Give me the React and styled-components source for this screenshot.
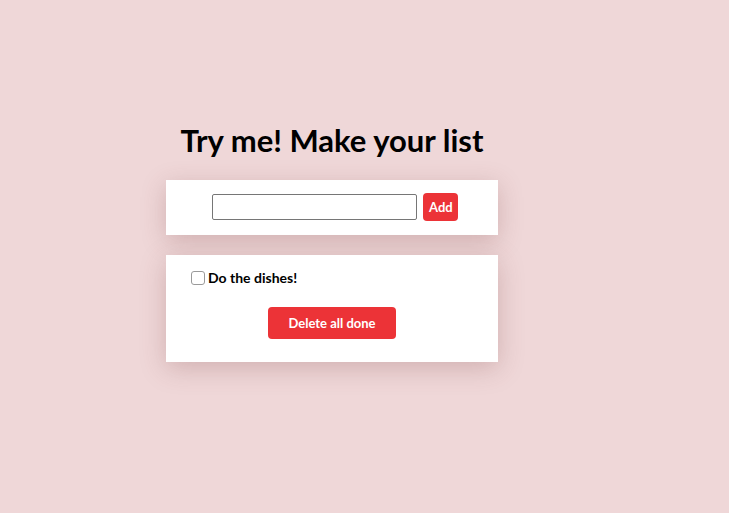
import React, { useState } from 'react';
import styled, { createGlobalStyle } from 'styled-components';

const GlobalStyle = createGlobalStyle`
  html, body {
    margin: 0;
    padding: 0;
    background: #efd7d8;
    font-family: Lato, "Noto Sans", sans-serif;
  }
`;

const Page = styled.div`
  min-height: 513px;
  padding: 122px 0 0 166px;
  box-sizing: border-box;
`;

const Wrapper = styled.div`
  width: 332px;
  display: flex;
  flex-direction: column;
  align-items: stretch;
`;

const Title = styled.h1`
  margin: 0 0 22px 0;
  text-align: center;
  font-size: 31px;
  font-weight: 700;
  color: #000;
  line-height: 36px;
`;

const Card = styled.div`
  background: #fff;
  box-shadow: 0 6px 24px rgba(120, 60, 60, 0.25);
  padding: ${(p) => p.$pad};
  margin-bottom: 20px;
`;

const Row = styled.form`
  display: flex;
  justify-content: center;
  align-items: center;
  gap: 6px;
  padding-left: 6px;
`;

const Input = styled.input`
  width: 205px;
  height: 26px;
  box-sizing: border-box;
  border: 1px solid #767676;
  border-radius: 2px;
  padding: 0 4px;
  outline: none;
`;

const RedButton = styled.button`
  background: #ec3337;
  color: #fff;
  border: none;
  border-radius: 4px;
  font-family: Lato, "Noto Sans", sans-serif;
  font-weight: 700;
  font-size: ${(p) => p.$size || '13px'};
  width: ${(p) => p.$w};
  height: ${(p) => p.$h};
  cursor: pointer;
`;

const Item = styled.label`
  display: flex;
  align-items: center;
  gap: 3px;
  font-size: 14px;
  font-weight: 700;
  color: #000;
  padding-left: 25px;
`;

const Check = styled.input`
  appearance: none;
  margin: 0;
  width: 14px;
  height: 14px;
  box-sizing: border-box;
  border: 1px solid #9a9a9a;
  border-radius: 3px;
  background: #fff;
  &:checked {
    background: #ec3337;
    border-color: #ec3337;
  }
`;

const Center = styled.div`
  display: flex;
  justify-content: center;
  margin-top: 21px;
`;

export default function App() {
  const [items, setItems] = useState([{ text: 'Do the dishes!', done: false }]);
  const [value, setValue] = useState('');

  const add = (e) => {
    e.preventDefault();
    if (!value.trim()) return;
    setItems([...items, { text: value, done: false }]);
    setValue('');
  };

  return (
    <>
      <GlobalStyle />
      <Page>
        <Wrapper>
          <Title>Try me! Make your list</Title>
          <Card $pad="13px 0 14px">
            <Row onSubmit={add}>
              <Input value={value} onChange={(e) => setValue(e.target.value)} />
              <RedButton type="submit" $w="35px" $h="28px">Add</RedButton>
            </Row>
          </Card>
          <Card $pad="14px 0 23px">
            {items.map((it, i) => (
              <Item key={i}>
                <Check
                  type="checkbox"
                  checked={it.done}
                  onChange={() =>
                    setItems(items.map((x, j) => (j === i ? { ...x, done: !x.done } : x)))
                  }
                />
                {it.text}
              </Item>
            ))}
            <Center>
              <RedButton
                $w="128px"
                $h="32px"
                $size="13px"
                onClick={() => setItems(items.filter((x) => !x.done))}
              >
                Delete all done
              </RedButton>
            </Center>
          </Card>
        </Wrapper>
      </Page>
    </>
  );
}
